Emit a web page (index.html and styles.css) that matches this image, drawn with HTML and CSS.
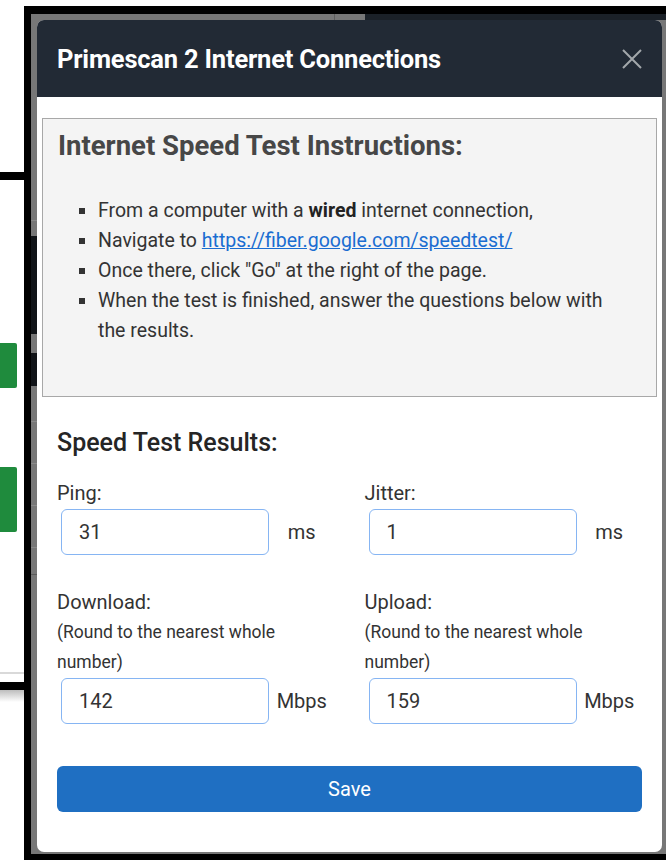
FILE: index.html
```html
<!DOCTYPE html>
<html lang="en">
<head>
<meta charset="utf-8">
<title>Primescan 2 Internet Connections</title>
<link rel="stylesheet" href="styles.css">
</head>
<body>
<div class="scene">
  <div class="side">
    <div class="side-rule side-rule-top"></div>
    <div class="side-btn side-btn-short"></div>
    <div class="side-btn side-btn-tall"></div>
    <div class="side-hairline"></div>
    <div class="side-rule side-rule-bottom"></div>
    <div class="side-shadow"></div>
  </div>

  <div class="window">
    <div class="app">
      <div class="app-top">
        <div class="app-top-tab"></div>
        <div class="app-top-tab app-top-tab-short"></div>
        <div class="app-top-bar"></div>
      </div>
      <div class="app-nav">
        <div class="nav-gap nav-gap-1"></div>
        <div class="nav-line"></div>
        <div class="nav-gap nav-gap-2"></div>
        <div class="nav-dark nav-dark-1"></div>
        <div class="nav-gap nav-gap-3"></div>
        <div class="nav-dark nav-dark-2"></div>
        <div class="nav-gap nav-gap-4"></div>
        <div class="nav-line"></div>
        <div class="nav-gap nav-gap-5"></div>
        <div class="nav-line"></div>
        <div class="nav-gap nav-gap-5"></div>
        <div class="nav-line"></div>
        <div class="nav-gap nav-gap-5"></div>
        <div class="nav-line"></div>
        <div class="nav-gap nav-gap-6"></div>
        <div class="nav-line nav-line-strong"></div>
      </div>
    </div>

    <div class="modal" role="dialog" aria-labelledby="modal-title">
      <div class="modal-header">
        <h2 class="modal-title" id="modal-title">Primescan 2 Internet Connections</h2>
        <button class="modal-close" type="button" aria-label="Close">
          <svg viewBox="0 0 20 20" width="20" height="20" aria-hidden="true">
            <path d="M1 1 L19 19 M19 1 L1 19" stroke="currentColor" stroke-width="2" fill="none"/>
          </svg>
        </button>
      </div>

      <div class="modal-body">
        <div class="instructions">
          <h3 class="instructions-title">Internet Speed Test Instructions:</h3>
          <ul class="instructions-list">
            <li>From a computer with a <b>wired</b> internet connection,</li>
            <li>Navigate to <a href="#">https://fiber.google.com/speedtest/</a></li>
            <li>Once there, click "Go" at the right of the page.</li>
            <li>When the test is finished, answer the questions below with the results.</li>
          </ul>
        </div>

        <form class="results">
          <h4 class="results-title">Speed Test Results:</h4>
          <div class="fields">
            <div class="field">
              <label class="field-label" for="ping">Ping:</label>
              <div class="entry">
                <input class="entry-input" id="ping" type="text" value="31">
                <span class="entry-unit">ms</span>
              </div>
            </div>
            <div class="field">
              <label class="field-label" for="jitter">Jitter:</label>
              <div class="entry">
                <input class="entry-input" id="jitter" type="text" value="1">
                <span class="entry-unit">ms</span>
              </div>
            </div>
            <div class="field">
              <label class="field-label" for="download">Download:</label>
              <div class="field-hint">(Round to the nearest whole number)</div>
              <div class="entry">
                <input class="entry-input" id="download" type="text" value="142">
                <span class="entry-unit">Mbps</span>
              </div>
            </div>
            <div class="field">
              <label class="field-label" for="upload">Upload:</label>
              <div class="field-hint">(Round to the nearest whole number)</div>
              <div class="entry">
                <input class="entry-input" id="upload" type="text" value="159">
                <span class="entry-unit">Mbps</span>
              </div>
            </div>
          </div>
          <button class="save-btn" type="button">Save</button>
        </form>
      </div>
    </div>
  </div>
</div>
</body>
</html>
```

FILE: styles.css
```css
* {
  box-sizing: border-box;
}

html,
body {
  margin: 0;
  padding: 0;
  background: #ffffff;
}

body {
  font-family: Roboto, "Liberation Sans", Arial, sans-serif;
}

.scene {
  display: flex;
  width: 666px;
  height: 860px;
  overflow: hidden;
  background: #ffffff;
}

/* page strip to the left of the window */
.side {
  flex: none;
  width: 24px;
  display: flex;
  flex-direction: column;
}

.side-rule {
  height: 8px;
  background: #000000;
}

.side-rule-top {
  margin-top: 172px;
}

.side-btn {
  width: 17px;
  background: #1f8b3d;
  border-radius: 0 2px 2px 0;
}

.side-btn-short {
  margin-top: 163px;
  height: 45px;
}

.side-btn-tall {
  margin-top: 79px;
  height: 65px;
}

.side-hairline {
  margin-top: 140px;
  height: 2px;
  background: #d9d9d9;
}

.side-rule-bottom {
  margin-top: 8px;
}

.side-shadow {
  height: 12px;
  background: linear-gradient(#bdbdbd, #ffffff);
}

/* framed window with a dimmed app behind the dialog */
.window {
  flex: none;
  position: relative;
  width: 660px;
  height: 856px;
  margin-top: 6px;
  border-style: solid;
  border-color: #000000;
  border-width: 8px 0 8px 7px;
  background: #777777;
}

.app {
  display: flex;
  flex-direction: column;
  height: 100%;
}

.app-top {
  display: flex;
  height: 6px;
}

.app-top-tab {
  width: 304px;
  border-right: 1px solid #5e5e5e;
}

.app-top-tab-short {
  width: 30px;
  border-right: 0;
}

.app-top-bar {
  flex: 1;
  background: #1b2128;
}

.app-nav {
  display: flex;
  flex-direction: column;
  width: 40px;
}

.nav-line {
  height: 1px;
  background: #8a8a8a;
}

.nav-line-strong {
  background: #5a5a5a;
}

.nav-gap-1 { height: 200px; }
.nav-gap-2 { height: 15px; }
.nav-gap-3 { height: 19px; }
.nav-gap-4 { height: 35px; }
.nav-gap-5 { height: 41px; }
.nav-gap-6 { height: 26px; }

.nav-dark {
  background: #101317;
}

.nav-dark-1 { height: 98px; }
.nav-dark-2 { height: 33px; }

/* dialog */
.modal {
  position: absolute;
  top: 6px;
  left: 6px;
  width: 625px;
  background: #ffffff;
  border-radius: 7px;
  overflow: hidden;
}

.modal-header {
  display: flex;
  align-items: center;
  justify-content: space-between;
  height: 77px;
  padding: 0 20px;
  background: #222a35;
}

.modal-title {
  margin: 0;
  font-size: 25.5px;
  font-weight: 700;
  color: #ffffff;
  letter-spacing: -0.2px;
}

.modal-close {
  display: flex;
  padding: 0;
  border: 0;
  background: none;
  color: #a3a7ab;
}

.modal-body {
  padding: 21px 5px 40px;
}

.instructions {
  height: 279px;
  padding: 12px 15px 0;
  background: #f4f4f4;
  border: 1px solid #a8a8a8;
}

.instructions-title {
  margin: 0;
  font-size: 27.5px;
  line-height: 30px;
  font-weight: 700;
  color: #474747;
}

.instructions-list {
  margin: 35px 0 0;
  padding: 0 25px 0 40px;
  list-style: square;
  font-size: 19.5px;
  line-height: 30px;
  color: #333333;
}

.instructions-list b {
  color: #222222;
}

.instructions-list a {
  color: #1a6dd1;
  text-decoration: underline;
}

.results {
  margin: 0;
  padding: 31px 15px 0;
}

.results-title {
  margin: 0 0 20px;
  font-size: 25px;
  line-height: 30px;
  font-weight: 500;
  color: #252525;
}

.fields {
  display: grid;
  grid-template-columns: 1fr 1fr;
  column-gap: 30px;
  row-gap: 32px;
}

.field-label,
.field-hint {
  display: block;
  font-size: 20px;
  line-height: 30px;
  color: #333333;
}

.field-hint {
  font-size: 17.5px;
}

.entry {
  display: grid;
  grid-template-columns: 208px 1fr;
  align-items: center;
  padding-left: 4px;
  margin-top: 1px;
}

.entry-input {
  width: 100%;
  height: 46px;
  padding: 0 17px;
  border: 1px solid #86b5f3;
  border-radius: 6px;
  font-family: inherit;
  font-size: 20px;
  color: #333333;
  background: #ffffff;
  outline: none;
}

.entry-unit {
  text-align: center;
  font-size: 20px;
  color: #333333;
}

.save-btn {
  display: block;
  width: 100%;
  height: 46px;
  margin-top: 42px;
  border: 0;
  border-radius: 6px;
  background: #1f6fc2;
  color: #ffffff;
  font-family: inherit;
  font-size: 20px;
}
```
